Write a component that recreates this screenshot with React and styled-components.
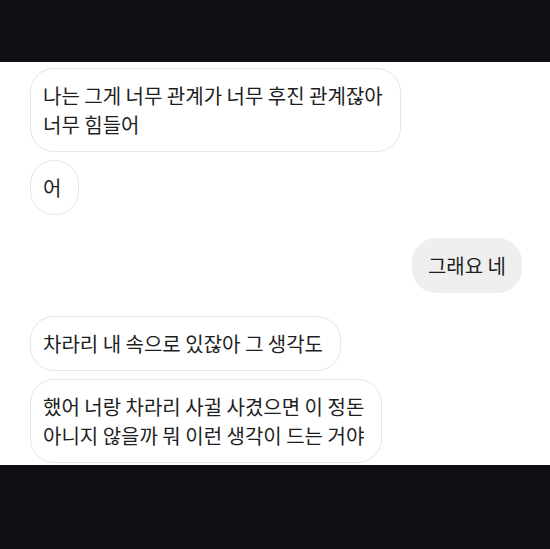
import React from "react";
import styled, { createGlobalStyle } from "styled-components";

const GlobalStyle = createGlobalStyle`
  html, body {
    margin: 0;
    padding: 0;
    background: #0e1015;
  }
  body {
    font-family: "Noto Sans CJK KR", "Noto Sans", sans-serif;
  }
`;

const messages = [
  { from: "them", text: ["나는 그게 너무 관계가 너무 후진 관계잖아", "너무 힘들어"] },
  { from: "them", text: ["어"] },
  { from: "me", text: ["그래요 네"], gapBefore: 23 },
  { from: "them", text: ["차라리 내 속으로 있잖아 그 생각도"], gapBefore: 23 },
  { from: "them", text: ["했어 너랑 차라리 사귈 사겼으면 이 정돈", "아니지 않을까 뭐 이런 생각이 드는 거야"] },
];

function App() {
  return (
    <>
      <GlobalStyle />
      <Screen>
        <Band $height={62} />
        <Chat>
          {messages.map((m, i) => (
            <Row key={i} $mine={m.from === "me"} $gap={i === 0 ? 0 : m.gapBefore || 8}>
              <Bubble $mine={m.from === "me"}>
                {m.text.map((line, j) => (
                  <Line key={j}>{line}</Line>
                ))}
              </Bubble>
            </Row>
          ))}
        </Chat>
        <Band $height={84} />
      </Screen>
    </>
  );
}

const Screen = styled.div`
  width: 550px;
  height: 549px;
  display: flex;
  flex-direction: column;
  background: #0e1015;
`;

const Band = styled.div`
  height: ${(p) => p.$height}px;
  flex-shrink: 0;
  background: #0e1015;
`;

const Chat = styled.div`
  height: 403px;
  flex-shrink: 0;
  background: #ffffff;
  padding: 6px 28px 0 30px;
  box-sizing: border-box;
  display: flex;
  flex-direction: column;
  overflow: hidden;
`;

const Row = styled.div`
  display: flex;
  justify-content: ${(p) => (p.$mine ? "flex-end" : "flex-start")};
  margin-top: ${(p) => p.$gap}px;
`;

const Bubble = styled.div`
  padding: ${(p) => (p.$mine ? "12px 15px" : "12px 17px 12px 12px")};
  border-radius: 24px;
  border: 1px solid ${(p) => (p.$mine ? "#efefef" : "#e6e6e6")};
  background: ${(p) => (p.$mine ? "#efefef" : "#ffffff")};
  color: #1e1e1e;
  font-size: 20px;
  line-height: 29px;
`;

const Line = styled.div`
  white-space: nowrap;
`;

export default App;
